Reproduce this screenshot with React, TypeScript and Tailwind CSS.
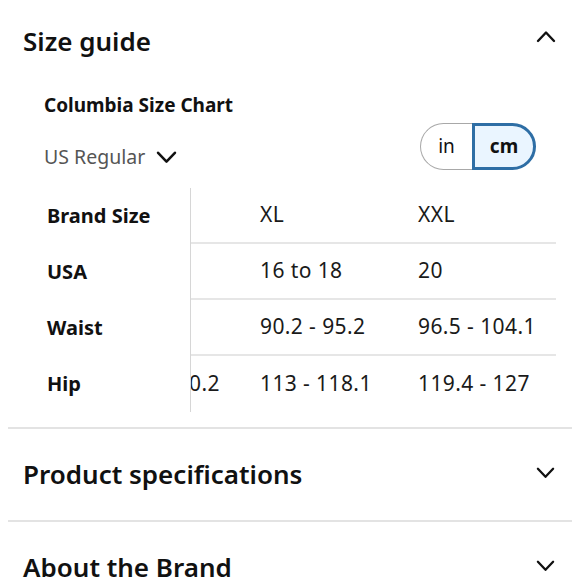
import React, { useState } from "react";

const font = { fontFamily: '"Noto Sans", "Open Sans", sans-serif' };

const Chevron = ({ up = false, className = "" }: { up?: boolean; className?: string }) => (
  <svg viewBox="0 0 20 12" className={className} fill="none" stroke="currentColor" strokeWidth={2.4} strokeLinecap="round" strokeLinejoin="round">
    {up ? <path d="M2 10.5 L10 2 L18 10.5" /> : <path d="M2 1.5 L10 10 L18 1.5" />}
  </svg>
);

const rows = [
  { label: "Brand Size", cells: ["L", "XL", "XXL"] },
  { label: "USA", cells: ["12 to 14", "16 to 18", "20"] },
  { label: "Waist", cells: ["80 - 85.1", "90.2 - 95.2", "96.5 - 104.1"] },
  { label: "Hip", cells: ["97.8 - 110.2", "113 - 118.1", "119.4 - 127"] },
];

const SizeTable = () => (
  <div className="flex">
    <div className="w-[147px] shrink-0 border-r border-[#d6d6d6]">
      {rows.map((r) => (
        <div key={r.label} className="h-[56px] flex items-center pl-[3px] text-[20px] font-bold text-[#111]">
          {r.label}
        </div>
      ))}
    </div>
    <div className="w-[365px] overflow-hidden">
      <div className="ml-[-89px] w-[474px]">
        {rows.map((r, i) => (
          <div
            key={r.label}
            className={`h-[56px] flex items-center text-[21px] tracking-[0.4px] text-[#1a1a1a] ${i < rows.length - 1 ? "border-b-2 border-[#e6e6e6]" : ""}`}
          >
            {r.cells.map((c, j) => (
              <div key={j} className="w-[158px] shrink-0 whitespace-nowrap">
                {c}
              </div>
            ))}
          </div>
        ))}
      </div>
    </div>
  </div>
);

const Section = ({ title, children }: { title: string; children?: React.ReactNode }) => (
  <div className="border-t-2 border-[#e3e3e3] px-[15px]">
    <div className="h-[91px] flex items-center justify-between">
      <h2 className="text-[26px] font-semibold text-[#111]">{title}</h2>
      <Chevron className="w-[19px] h-[12px] mr-[2px] mb-[4px] text-[#111]" />
    </div>
    {children}
  </div>
);

export default function App() {
  const [unit, setUnit] = useState<"in" | "cm">("cm");

  return (
    <div className="min-h-screen bg-white px-[8px]" style={font}>
      <div className="px-[15px] pb-[15px]">
        <div className="h-[82px] flex items-center justify-between">
          <h2 className="text-[26px] font-semibold text-[#111]">Size guide</h2>
          <Chevron up className="w-[20px] h-[13px] mr-[1px] mb-[9px] text-[#111]" />
        </div>
        <div className="pl-[21px]">
          <h3 className="mt-[10px] text-[19px] leading-[26px] font-bold text-[#111]">Columbia Size Chart</h3>
          <div className="mt-[5px] flex items-start justify-between">
            <button className="mt-[21px] flex items-center gap-[11px] text-[19.5px] leading-[26px] text-[#555]">
              US Regular
              <Chevron className="w-[21px] h-[13px] text-[#111]" />
            </button>
            <div className="flex h-[47px] mr-[21px]">
              <button
                onClick={() => setUnit("in")}
                className={`w-[52px] rounded-l-full text-[19px] text-[#111] ${unit === "in" ? "border-[3px] border-[#2e6ea5] bg-[#eaf5ff] font-bold" : "border border-r-0 border-[#a8a8a8]"}`}
              >
                in
              </button>
              <button
                onClick={() => setUnit("cm")}
                className={`w-[64px] rounded-r-full text-[19px] text-[#111] ${unit === "cm" ? "border-[3px] border-[#2e6ea5] bg-[#eaf5ff] font-bold" : "border border-l-0 border-[#a8a8a8]"}`}
              >
                cm
              </button>
            </div>
          </div>
          <div className="mt-[18px]">
            <SizeTable />
          </div>
        </div>
      </div>
      <Section title="Product specifications" />
      <Section title="About the Brand" />
    </div>
  );
}
